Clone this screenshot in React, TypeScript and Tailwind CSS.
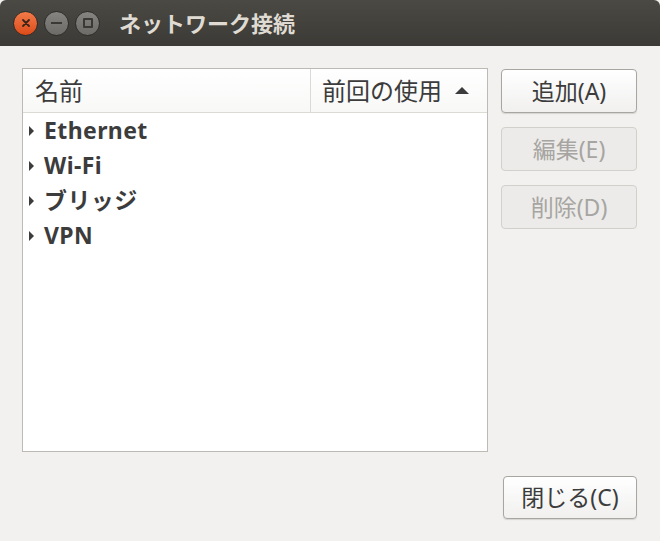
import React from 'react';

const FONT = { fontFamily: "'Noto Sans', 'Noto Sans CJK JP', sans-serif" };

const groups = ['Ethernet', 'Wi-Fi', 'ブリッジ', 'VPN'];

const WindowButton: React.FC<{ kind: 'close' | 'min' | 'max' }> = ({ kind }) => {
  if (kind === 'close') {
    return (
      <div className="w-[25px] h-[25px] rounded-full border border-[#2e2d2a] bg-gradient-to-b from-[#f27a48] to-[#dc4a17] flex items-center justify-center">
        <svg width="10" height="10" viewBox="0 0 10 10">
          <path d="M2 2l6 6M8 2l-6 6" stroke="#3b2418" strokeWidth="1.8" strokeLinecap="round" />
        </svg>
      </div>
    );
  }
  return (
    <div className="w-[25px] h-[25px] rounded-full border border-[#2e2d2a] bg-gradient-to-b from-[#858480] to-[#6c6b67] flex items-center justify-center">
      {kind === 'min' ? (
        <div className="w-[11px] h-[2px] bg-[#3a3935]" />
      ) : (
        <div className="w-[10px] h-[10px] border-2 border-[#3a3935] rounded-[1px]" />
      )}
    </div>
  );
};

const DialogButton: React.FC<{ label: string; disabled?: boolean; className?: string }> = ({ label, disabled, className }) => (
  <div
    className={`flex items-center justify-center rounded-[4px] text-[23px] ${
      disabled
        ? 'border border-[#d2d0cb] bg-[#ecebe9] text-[#a6a5a1]'
        : 'border border-[#a8a6a1] bg-gradient-to-b from-[#ffffff] to-[#f1f0ef] text-[#3c3c3c] shadow-[0_1px_1px_rgba(0,0,0,0.12)]'
    } ${className || ''}`}
  >
    {label}
  </div>
);

export default function App() {
  return (
    <div className="w-[660px] h-[541px] bg-[#f2f1f0] flex flex-col overflow-hidden" style={FONT}>
      {/* Title bar */}
      <div className="h-[46px] shrink-0 flex items-center pl-[13px] bg-gradient-to-b from-[#4a4943] to-[#3b3a36] rounded-t-[6px]">
        <div className="flex items-center gap-[6px]">
          <WindowButton kind="close" />
          <WindowButton kind="min" />
          <WindowButton kind="max" />
        </div>
        <span className="ml-[19px] text-[22px] font-bold text-[#dfdbd2] leading-none">ネットワーク接続</span>
      </div>

      {/* Body */}
      <div className="flex-1 flex flex-col px-[22px] pt-[22px] pb-[22px]">
        <div className="flex">
          {/* Tree view */}
          <div className="w-[466px] h-[384px] border border-[#bdbab5] bg-white flex flex-col">
            <div className="h-[44px] shrink-0 flex border-b border-[#dcdad5] bg-gradient-to-b from-[#ffffff] to-[#f8f8f7] text-[24px] text-[#3c3c3c]">
              <div className="w-[287px] flex items-center pl-[12px]">名前</div>
              <div className="flex-1 flex items-center justify-between border-l border-[#dcdad5] pl-[11px] pr-[18px]">
                <span>前回の使用</span>
                <svg width="14" height="7" viewBox="0 0 14 7">
                  <path d="M0 7L7 0L14 7Z" fill="#3c3c3c" />
                </svg>
              </div>
            </div>
            <div className="flex flex-col">
              {groups.map(g => (
                <div key={g} className="h-[35px] flex items-center pl-[5px]">
                  <svg width="7" height="10" viewBox="0 0 7 10" className="mr-[9px]">
                    <path d="M1 0L6 5L1 10Z" fill="#3c3c3c" />
                  </svg>
                  <span className="text-[23px] tracking-[0.4px] font-bold text-[#3c3c3c]">{g}</span>
                </div>
              ))}
            </div>
          </div>

          {/* Side buttons */}
          <div className="ml-[13px] mt-[1px] flex flex-col gap-[14px]">
            <DialogButton label="追加(A)" className="w-[136px] h-[44px]" />
            <DialogButton label="編集(E)" disabled className="w-[136px] h-[44px]" />
            <DialogButton label="削除(D)" disabled className="w-[136px] h-[44px]" />
          </div>
        </div>

        <div className="mt-[24px] flex justify-end pr-[1px]">
          <DialogButton label="閉じる(C)" className="w-[134px] h-[43px]" />
        </div>
      </div>
    </div>
  );
}
